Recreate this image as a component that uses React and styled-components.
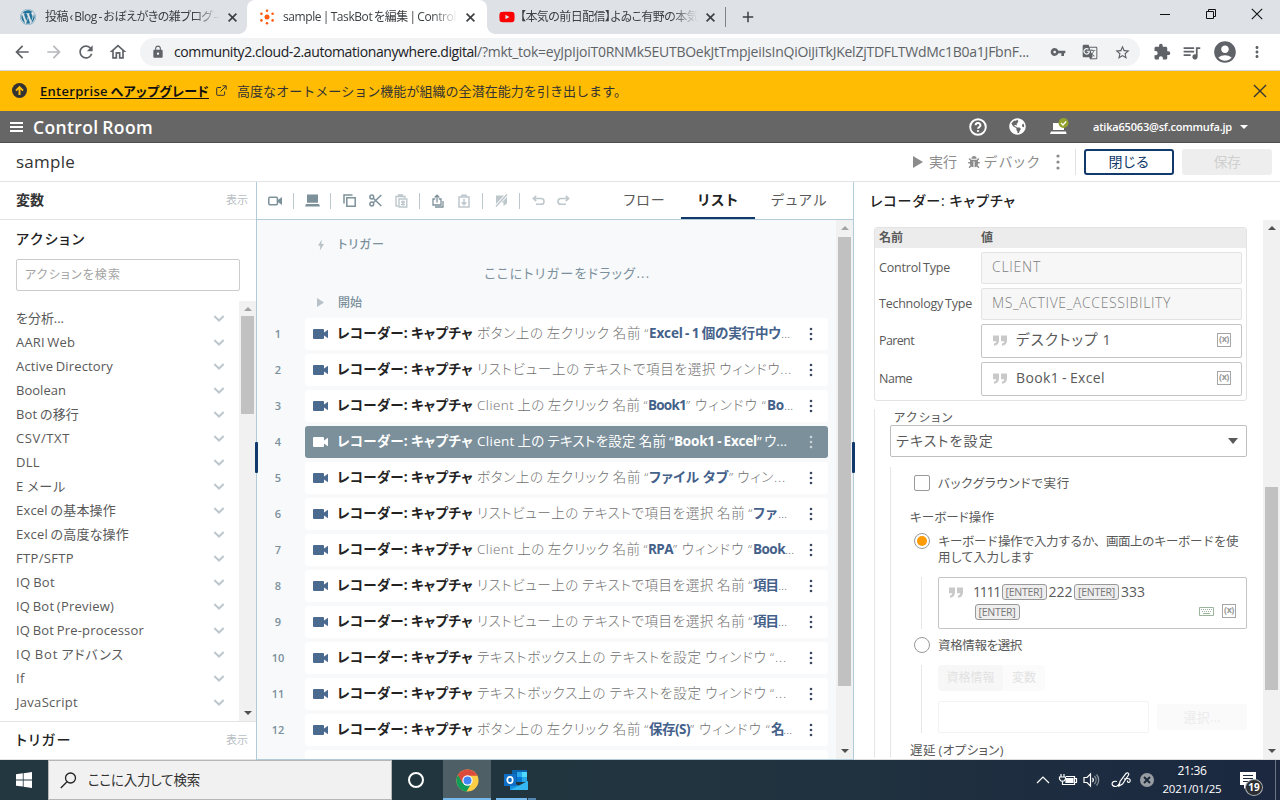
import React, { useLayoutEffect, useRef, useState } from "react";
import styled, { createGlobalStyle } from "styled-components";
import {
  MdArrowBack,
  MdArrowForward,
  MdRefresh,
  MdOutlineHome,
  MdLock,
  MdVpnKey,
  MdGTranslate,
  MdStarBorder,
  MdExtension,
  MdQueueMusic,
  MdAccountCircle,
  MdMoreVert,
  MdAdd,
} from "react-icons/md";
import { FaWordpress, FaYoutube, FaBug, FaGlobeAmericas } from "react-icons/fa";

const GlobalStyle = createGlobalStyle`
  * {
    box-sizing: border-box;
  }
  body {
    margin: 0;
    font-family: "Open Sans", "Noto Sans CJK JP", sans-serif;
    font-size: 13px;
    color: #595959;
    overflow: hidden;
  }
  svg {
    display: block;
    flex: none;
  }
`;

const Screen = styled.div`
  width: 1280px;
  height: 800px;
  display: flex;
  flex-direction: column;
  overflow: hidden;
  background: white;
`;

const Run = styled.span`
  display: inline-block;
  flex: none;
  justify-self: start;
  white-space: pre;
  line-height: 16px;
  word-spacing: -1px;
  font-feature-settings: ${(p) => (p.$full ? "normal" : '"palt"')};
  font-size: ${(p) => p.$size || 13}px;
  font-weight: ${(p) => p.$weight || 400};
  color: ${(p) => p.$color || "inherit"};
  text-decoration: ${(p) => (p.$underline ? "underline" : "none")};
  text-underline-offset: 2px;
`;

// tracks the letters so that the run takes up exactly w pixels
const Text = ({ w, size, weight, color, underline, full, children }) => {
  let ref = useRef();
  let [spacing, setSpacing] = useState(0);

  useLayoutEffect(() => {
    let natural = ref.current.getBoundingClientRect().width;
    setSpacing((w - natural) / [...children].length);
  }, []);

  return (
    <Run
      ref={ref}
      $size={size}
      $weight={weight}
      $color={color}
      $underline={underline}
      $full={full}
      style={{ letterSpacing: spacing }}
    >
      {children}
    </Run>
  );
};

/* ---------- browser ---------- */

const TabStrip = styled.div`
  height: 34px;
  flex: none;
  display: flex;
  background: #dee1e6;
`;

const Tab = styled.div`
  position: relative;
  width: ${(p) => p.$w}px;
  padding-left: ${(p) => p.$pad}px;
  display: flex;
  align-items: center;
  background: ${(p) => (p.$active ? "white" : "transparent")};
  border-radius: 8px 8px 0 0;
  color: #3c4043;
`;

const TabIcon = styled.div`
  width: ${(p) => p.$w}px;
  flex: none;
`;

const TabTitle = styled.div`
  width: ${(p) => p.$w}px;
  flex: none;
  height: 22px;
  display: flex;
  align-items: center;
  margin-right: 8px;
  mask-image: linear-gradient(to right, black 85%, transparent);
`;

const TabFoot = styled.div`
  position: absolute;
  bottom: 0;
  ${(p) => p.$side}: -8px;
  width: 8px;
  height: 8px;
  background: radial-gradient(
    circle at ${(p) => (p.$side === "left" ? "0 0" : "100% 0")},
    transparent 7.5px,
    white 8px
  );
`;

const TabDivider = styled.div`
  width: 1px;
  height: 20px;
  margin: 7px 13px 0 4px;
  background: #7f8388;
`;

const NewTab = styled.div`
  padding-top: 8px;
  color: #3c4043;
`;

const WindowButtons = styled.div`
  margin-left: auto;
  padding: 8px 17px 0 0;
  display: flex;
  gap: 34px;
`;

const AddressRow = styled.div`
  height: 37px;
  flex: none;
  display: flex;
  align-items: center;
  padding: 0 9px 0 12px;
  border-bottom: 1px solid #d5d8dc;
  color: #5f6368;
`;

const NavButton = styled.div`
  width: 32px;
  display: flex;
  opacity: ${(p) => (p.$off ? 0.45 : 1)};
`;

const AddressBar = styled.div`
  width: 1000px;
  height: 28px;
  margin-right: 13px;
  padding: 0 9px 0 11px;
  display: flex;
  align-items: center;
  border-radius: 14px;
  background: #f1f3f4;
`;

const LockBox = styled.div`
  width: 23px;
`;

const AddressIcons = styled.div`
  margin-left: auto;
  display: flex;
  align-items: center;
  gap: 16px;
`;

const ExtensionIcons = styled.div`
  display: flex;
  align-items: center;
  gap: 10px;
`;

/* ---------- banner and headers ---------- */

const Banner = styled.div`
  height: 40px;
  flex: none;
  display: flex;
  align-items: center;
  padding: 0 13px 1px 12px;
  background: #ffbc03;
  color: #333;
`;

const Gap = styled.div`
  width: ${(p) => p.$w}px;
  flex: none;
`;

const Push = styled.div`
  margin-left: auto;
  display: flex;
  align-items: center;
`;

const Header = styled.div`
  height: 32px;
  flex: none;
  display: flex;
  align-items: center;
  padding: 0 32px 0 10px;
  background: #666;
  border-bottom: 1px solid #4d4d4d;
  color: white;
`;

const Caret = styled.div`
  width: 0;
  height: 0;
  border-left: ${(p) => p.$s || 4}px solid transparent;
  border-right: ${(p) => p.$s || 4}px solid transparent;
  border-${(p) => (p.$up ? "bottom" : "top")}: ${(p) => p.$h || p.$s || 4}px solid
    ${(p) => p.$color || "white"};
`;

const TitleBar = styled.div`
  height: 39px;
  flex: none;
  display: flex;
  align-items: center;
  padding: 0 8px 0 16px;
  border-bottom: 1px solid #e0e4e7;
`;

const Separator = styled.div`
  width: 1px;
  height: ${(p) => p.$h || 16}px;
  flex: none;
  background: ${(p) => p.$color || "#bcc7cd"};
`;

const Button = styled.div`
  width: 90px;
  height: 26px;
  display: flex;
  align-items: center;
  justify-content: center;
  border-radius: 3px;
  border: ${(p) => (p.$off ? "none" : "2px solid #12396b")};
  background: ${(p) => (p.$off ? "#eee" : "white")};
  margin-left: 8px;
`;

/* ---------- workspace ---------- */

const Workspace = styled.div`
  height: 578px;
  flex: none;
  display: flex;
`;

const Side = styled.div`
  position: relative;
  width: 257px;
  flex: none;
  display: flex;
  flex-direction: column;
  border-right: 1px solid #b2cbd9;
`;

const SideHeader = styled.div`
  height: 38px;
  flex: none;
  display: flex;
  align-items: center;
  justify-content: space-between;
  padding: 0 8px 2px 16px;
  border-bottom: 1px solid #e0e4e7;
`;

const Handle = styled.div`
  position: absolute;
  top: 260px;
  ${(p) => p.$side}: -2px;
  width: 3px;
  height: 31px;
  background: #12396b;
  border-radius: 1px;
  z-index: 1;
`;

const SectionTitle = styled.div`
  height: 39px;
  padding: 0 0 2px 16px;
  display: flex;
  align-items: center;
`;

const SearchInput = styled.div`
  height: 32px;
  flex: none;
  margin: 0 16px 10px;
  padding-left: 8px;
  display: flex;
  align-items: center;
  border: 1px solid #ccc;
  border-radius: 2px;
`;

const PackageArea = styled.div`
  height: 421px;
  display: flex;
  border-bottom: 1px solid #e0e4e7;
`;

const PackageList = styled.div`
  flex: 1;
  padding: 5px 14px 0 16px;
`;

const Package = styled.div`
  height: 24px;
  display: flex;
  align-items: center;
  justify-content: space-between;
`;

const ScrollTrack = styled.div`
  width: ${(p) => p.$w}px;
  flex: none;
  display: flex;
  flex-direction: column;
  align-items: center;
  background: #f1f1f1;
  padding: 6px 0 6px;
`;

const Thumb = styled.div`
  width: 13px;
  height: ${(p) => p.$h}px;
  margin: ${(p) => p.$top}px 0 auto;
  background: #c1c1c1;
`;

const Center = styled.div`
  width: 597px;
  flex: none;
  display: flex;
  flex-direction: column;
  border-right: 1px solid #b2cbd9;
`;

const Toolbar = styled.div`
  height: 38px;
  flex: none;
  display: flex;
  align-items: center;
  border-bottom: 1px solid #b2cbd9;
  color: #7d919b;
`;

const Tool = styled.div`
  width: ${(p) => p.$w || 36}px;
  display: flex;
  justify-content: center;
  opacity: ${(p) => (p.$off ? 0.5 : 1)};
`;

const ViewTab = styled.div`
  height: 37px;
  width: 74px;
  display: flex;
  align-items: center;
  justify-content: center;
  padding: 0 0 1px 1px;
  box-shadow: ${(p) => (p.$active ? "inset 0 -2px 0 #12396b" : "none")};
`;

const CanvasArea = styled.div`
  flex: 1;
  min-height: 0;
  display: flex;
  background: #f7f9fb;
  border-bottom: 1px solid #b2cbd9;
`;

const Canvas = styled.div`
  width: 579px;
  overflow: hidden;
  padding-right: 8px;
`;

const CanvasLabel = styled.div`
  height: ${(p) => p.$h}px;
  margin-top: ${(p) => p.$top || 0}px;
  display: flex;
  align-items: center;
  padding: 1px 0 0 60px;
`;

const LabelIcon = styled.div`
  width: 21px;
`;

const DropHint = styled.div`
  height: 10px;
  display: flex;
  align-items: center;
  justify-content: center;
  padding-left: 50px;
`;

const Line = styled.div`
  display: grid;
  grid-template-columns: 42px 523px;
  column-gap: 6px;
  height: 32px;
  margin-bottom: 4px;
  align-items: center;
`;

const LineNumber = styled.div`
  padding-bottom: 2px;
  text-align: center;
  font-size: 11px;
  font-weight: 600;
  color: #7b909c;
`;

const LineBox = styled.div`
  height: 32px;
  display: flex;
  align-items: center;
  padding: 0 0 1px 8px;
  border-radius: 3px;
  background: ${(p) => (p.$selected ? "#7b909b" : "white")};
  color: ${(p) => (p.$selected ? "white" : "#6f6f6f")};
`;

const LineText = styled.div`
  width: 472px;
  height: 22px;
  display: flex;
  align-items: center;
  padding-bottom: 2px;
`;

/* ---------- detail panel ---------- */

const Detail = styled.div`
  position: relative;
  flex: 1;
  display: flex;
  flex-direction: column;
  border-bottom: 1px solid #ddd;
`;

const DetailTitle = styled.div`
  height: 38px;
  flex: none;
  display: flex;
  align-items: center;
  padding-left: 16px;
`;

const DetailScroll = styled.div`
  flex: 1;
  min-height: 0;
  display: flex;
`;

const DetailBody = styled.div`
  width: 409px;
  overflow: hidden;
  padding: 7px 16px 0 20px;
`;

const Table = styled.div`
  height: 174px;
  border: 1px solid #e3e3e3;
  border-radius: 3px;
`;

const TableRow = styled.div`
  display: grid;
  grid-template-columns: 102px 261px;
  align-items: center;
  padding-left: 4px;
  height: ${(p) => p.$h}px;
  margin-bottom: 4px;
  background: ${(p) => (p.$head ? "#ececec" : "white")};
`;

const Field = styled.div`
  height: ${(p) => p.$h}px;
  display: flex;
  align-items: center;
  padding: 0 10px 2px;
  border: 1px solid ${(p) => (p.$off ? "#e3e3e3" : "#c4c4c4")};
  border-radius: 2px;
  background: ${(p) => (p.$off ? "#f7f7f7" : "white")};
`;

const Group = styled.div`
  margin-top: ${(p) => p.$top || 0}px;
  margin-left: ${(p) => p.$left || 0}px;
  height: ${(p) => (p.$h ? `${p.$h}px` : "auto")};
  border-left: 1px solid #e6e6e6;
  padding-left: ${(p) => p.$pad || 15}px;
`;

const FieldLabel = styled.div`
  height: 16px;
  margin-top: ${(p) => p.$top || 0}px;
  padding: 1px 0 0 4px;
  display: flex;
  align-items: center;
`;

const Select = styled.div`
  height: 32px;
  padding: 0 8px 0 5px;
  display: flex;
  align-items: center;
  justify-content: space-between;
  border: 1px solid #bfbfbf;
  border-radius: 2px;
`;

const Option = styled.div`
  padding-top: ${(p) => p.$top}px;
  margin-left: 8px;
  display: flex;
  align-items: flex-start;
  gap: 8px;
`;

const OptionText = styled.div`
  margin: 1px 0 -1px;
  display: flex;
  flex-direction: column;
  align-items: flex-start;
`;

const Check = styled.div`
  width: 16px;
  height: 16px;
  flex: none;
  border: 1px solid #999;
  border-radius: ${(p) => (p.$round ? "50%" : "2px")};
  display: flex;
  align-items: center;
  justify-content: center;
`;

const RadioDot = styled.div`
  width: 10px;
  height: 10px;
  border-radius: 50%;
  background: #ff9b05;
`;

const KeyBox = styled.div`
  height: 52px;
  display: flex;
  border: 1px solid #c4c4c4;
  border-radius: 2px;
  padding: 6px 10px 0 9px;
`;

const KeyQuote = styled.div`
  padding-top: 3px;
`;

const KeyLines = styled.div`
  flex: 1;
  padding-left: 9px;
`;

const KeyLine = styled.div`
  height: 16px;
  margin-bottom: 4px;
  display: flex;
  align-items: center;
`;

const KeyChip = styled.div`
  width: 45px;
  height: 16px;
  margin: 0 2px 0 1.5px;
  display: flex;
  align-items: center;
  justify-content: center;
  border: 1px solid #999;
  border-radius: 3px;
  background: #eee;
`;

const KeyTools = styled.div`
  display: flex;
  align-items: center;
  gap: 8px;
  height: 14px;
  margin-top: 20px;
`;

const Segments = styled.div`
  width: 107px;
  height: 26px;
  display: flex;
  border-radius: 4px;
  background: #fbfbfb;
`;

const Segment = styled.div`
  width: ${(p) => p.$w}px;
  display: flex;
  align-items: center;
  justify-content: center;
  border-radius: 4px;
  background: ${(p) => (p.$active ? "#f7f7f7" : "transparent")};
`;

const CredentialRow = styled.div`
  margin-top: 10px;
  display: flex;
  align-items: center;
  gap: 8px;
`;

const CredentialInput = styled.div`
  width: 211px;
  height: 32px;
  border: 1px solid #f3f3f3;
  border-radius: 2px;
`;

const PickButton = styled.div`
  width: 90px;
  height: 26px;
  display: flex;
  align-items: center;
  justify-content: center;
  border-radius: 2px;
  background: #fafafa;
`;

const VariableMark = styled.div`
  width: 14px;
  height: 14px;
  border: 1px solid #a6a6a6;
  font-size: 9px;
  font-weight: 700;
  line-height: 10px;
  letter-spacing: -0.5px;
  text-align: center;
  color: #999;
`;

/* ---------- taskbar ---------- */

const Taskbar = styled.div`
  height: 40px;
  flex: none;
  display: flex;
  background: linear-gradient(to right, #22373f, #21343f 55%, #1b2840);
`;

const TaskButton = styled.div`
  position: relative;
  width: ${(p) => p.$w || 48}px;
  display: flex;
  align-items: center;
  justify-content: center;
  background: ${(p) => (p.$active ? "#4f5f66" : "transparent")};
`;

const TaskMark = styled.div`
  position: absolute;
  left: ${(p) => p.$left || 0}px;
  bottom: 0;
  width: ${(p) => p.$w}px;
  height: 2px;
  background: ${(p) => (p.$dim ? "#5487b0" : "#76b9ed")};
`;

const CortanaRing = styled.div`
  width: 16px;
  height: 16px;
  border: 2px solid white;
  border-radius: 50%;
`;

const TaskSearch = styled.div`
  width: 344px;
  display: flex;
  align-items: center;
  gap: 11px;
  padding-left: 11px;
  background: #f1f1f1;
  border: 1px solid #b4b6b8;
`;

const Tray = styled.div`
  margin-left: auto;
  display: flex;
  align-items: center;
  color: white;
`;

const Clock = styled.div`
  width: 60px;
  height: 34px;
  margin: 0 17px 0 8px;
  display: flex;
  flex-direction: column;
  align-items: center;
  justify-content: space-between;
`;

const Notify = styled.div`
  position: relative;
  width: 26px;
  height: 30px;
  margin-right: 10px;
  padding-top: 7px;
`;

const NotifyBadge = styled.div`
  position: absolute;
  left: 6px;
  top: 14px;
  width: 18px;
  height: 17px;
  border-radius: 50%;
  border: 1px solid #a9adb0;
  background: #2a2e33;
  font-size: 10px;
  font-weight: 700;
  line-height: 14px;
  text-align: center;
`;

const DesktopEdge = styled.div`
  width: 5px;
  height: 40px;
  border-left: 1px solid #6d7582;
`;

/* ---------- drawings ---------- */

const AutomationLogo = () => (
  <svg width="16" height="16" viewBox="0 0 16 16" fill="#ff5a10">
    <circle cx="8" cy="8" r="2.5" />
    <circle cx="8" cy="1.8" r="1.3" />
    <circle cx="8" cy="14.2" r="1.3" />
    <circle cx="2.4" cy="4.8" r="1.3" />
    <circle cx="13.6" cy="4.8" r="1.3" />
    <circle cx="2.4" cy="11.4" r="1.3" />
    <circle cx="13.6" cy="11.4" r="1.3" />
  </svg>
);

const MinimizeIcon = () => (
  <svg width="12" height="12" viewBox="0 0 12 12" stroke="#111">
    <path d="M1 6.5h10" />
  </svg>
);

const RestoreIcon = () => (
  <svg width="12" height="12" viewBox="0 0 12 12" stroke="#111" fill="none">
    <path d="M1.5 3.5h7v7h-7zM3.5 3.5v-2h7v7h-2" />
  </svg>
);

const CrossIcon = ({ size = 12, color = "#111", width = 1.1 }) => (
  <svg
    width={size}
    height={size}
    viewBox="0 0 12 12"
    stroke={color}
    strokeWidth={width}
  >
    <path d="M.8.8l10.4 10.4M11.2.8L.8 11.2" />
  </svg>
);

const TabClose = () => <CrossIcon size={9} color="#3c4043" width={2.2} />;

const HelpIcon = () => (
  <svg width="18" height="18" viewBox="0 0 18 18" fill="none" stroke="white">
    <circle cx="9" cy="9" r="7.8" strokeWidth="1.9" />
    <path d="M6.6 7.2a2.400 2.200 0 1 1 3.600 1.900c-.8.5-1.200.8-1.200 1.700" strokeWidth="1.900" />
    <circle cx="9" cy="13" r="1.100" fill="white" stroke="none" />
  </svg>
);

const UpgradeIcon = () => (
  <svg width="15" height="15" viewBox="0 0 15 15">
    <circle cx="7.5" cy="7.5" r="7.5" fill="#333" />
    <path
      d="M7.5 12V4.2M4 7.6l3.5-3.5L11 7.6"
      stroke="#ffbc03"
      strokeWidth="2"
      fill="none"
    />
  </svg>
);

const ExternalIcon = () => (
  <svg width="11" height="11" viewBox="0 0 11 11" fill="none" stroke="#333">
    <path d="M5 2.5H1.5a.8.8 0 0 0-.8.8v6.2a.8.8 0 0 0 .8.8h6.3a.8.8 0 0 0 .8-.8V6.5M6.5.8h3.7v3.7M10 1L4.5 6.5" />
  </svg>
);

const BurgerIcon = () => (
  <svg width="13" height="10" viewBox="0 0 13 10" fill="white">
    <path d="M0 0h13v2H0zM0 4h13v2H0zM0 8h13v2H0z" />
  </svg>
);

const DeviceIcon = () => (
  <svg width="19" height="20" viewBox="0 0 19 20">
    <path d="M3 6h11v7H3zM1 14.500h15l.5 2.500H0z" fill="white" />
    <circle cx="13.5" cy="6" r="5" fill="#94a22d" />
    <path d="M11 6l2 2 3.2-3.6" stroke="white" strokeWidth="1.3" fill="none" />
  </svg>
);

const PlayIcon = ({ w = 10, h = 12, color }) => (
  <svg width={w} height={h} viewBox="0 0 10 12" fill={color} preserveAspectRatio="none">
    <path d="M0 0l10 6-10 6z" />
  </svg>
);

const DotsIcon = ({ color, r = 1.3, gap = 5, size = 16 }) => (
  <svg width="4" height={size} viewBox={`0 ${-size / 2} 4 ${size}`} fill={color}>
    <circle cx="2" cy={-gap} r={r} />
    <circle cx="2" cy="0" r={r} />
    <circle cx="2" cy={gap} r={r} />
  </svg>
);

const ChevronIcon = () => (
  <svg width="12" height="8" viewBox="0 0 12 8">
    <path
      d="M1.3 2L6 6.500l4.7-4.500"
      stroke="#bdc8ce"
      strokeWidth="2"
      fill="none"
    />
  </svg>
);

const CameraIcon = ({ color }) => (
  <svg width="15" height="12" viewBox="0 0 15 12" fill={color}>
    <path d="M1 1h9a1 1 0 0 1 1 1v2.400L15 1.800v8.400l-4-2.600V10a1 1 0 0 1-1 1H1a1 1 0 0 1-1-1V2a1 1 0 0 1 1-1z" />
  </svg>
);

const RecordIcon = () => (
  <svg width="14" height="10" viewBox="0 0 14 10">
    <rect x=".8" y="1.3" width="8.6" height="7.4" rx="1" fill="none" stroke="currentColor" strokeWidth="1.5" />
    <path d="M9.8 4L14 1v8L9.8 6z" fill="currentColor" />
  </svg>
);

const LaptopIcon = () => (
  <svg width="15" height="13" viewBox="0 0 15 13" fill="currentColor">
    <path d="M2 .5h11v8.300H2zM1 10h13l1 2.500H0z" />
  </svg>
);

const CopyIcon = () => (
  <svg width="13" height="13" viewBox="0 0 13 13" fill="none" stroke="currentColor" strokeWidth="1.5">
    <path d="M3.8 3.8h8.4v8.4H3.8zM1 9.5V1h8.5" />
  </svg>
);

const CutIcon = () => (
  <svg width="13" height="13" viewBox="0 0 13 13" fill="none" stroke="currentColor" strokeWidth="1.5">
    <circle cx="2.8" cy="3" r="1.9" />
    <circle cx="2.8" cy="10" r="1.9" />
    <path d="M4.3 4.3l8 7.7M4.3 8.7l8-7.7" />
  </svg>
);

const PasteIcon = () => (
  <svg width="13" height="14" viewBox="0 0 13 14" fill="none" stroke="currentColor" strokeWidth="1.4">
    <path d="M3 12H1V2.5h9V4M3.5 2.5V1h4v1.5M4 5h7.8v8H4zM6 8h4M6 10.5h4M8 6.5v5" />
  </svg>
);

const ShareIcon = () => (
  <svg width="12" height="14" viewBox="0 0 12 14" fill="none" stroke="currentColor" strokeWidth="1.3">
    <path d="M3.2 5H1v6h8V5H6.8M5 8.5V1.4M2.7 3.5L5 1.2l2.3 2.3M3 13h8V7" />
  </svg>
);

const ClipDownIcon = () => (
  <svg width="12" height="14" viewBox="0 0 12 14" fill="none" stroke="currentColor" strokeWidth="1.5">
    <path d="M1 3h10v10H1zM4 3V1.200h4V3M6 5v5.500M3.600 8.200L6 10.600l2.400-2.400" />
  </svg>
);

const DisableIcon = () => (
  <svg width="13" height="13" viewBox="0 0 13 13">
    <path d="M1 1.500h8L1 10zM12 3v6.500L8.500 12V8.500H6.500z" fill="currentColor" />
    <path d="M1 12.500L12 .5" stroke="currentColor" strokeWidth="1.500" />
  </svg>
);

const UndoIcon = ({ flip }) => (
  <svg width="13" height="11" viewBox="0 0 13 11" fill="none" stroke="currentColor" strokeWidth="1.600">
    <path
      transform={flip ? "translate(13 0) scale(-1 1)" : undefined}
      d="M4.200.8L1.400 3.500l2.800 2.700M1.500 3.500h7.600a2.800 2.800 0 0 1 0 5.800H4"
    />
  </svg>
);

const BoltIcon = () => (
  <svg width="8" height="12" viewBox="0 0 8 12" fill="#b7c1c7">
    <path d="M4.800.5L1 6.800h2.400L2.800 11.500 7 5H4.400z" />
  </svg>
);

const QuoteIcon = () => (
  <svg width="16" height="11" viewBox="0 0 16 11" fill="#c9c9c9">
    <path d="M1 .5h6v5C7 8.500 5 10.500 2 10.800V8.500C3.500 8.300 4.200 7.500 4.200 6.200H1zM9 .5h6v5c0 3-2 5-5 5.300V8.500c1.500-.2 2.200-1 2.200-2.300H9z" />
  </svg>
);

const KeyboardIcon = () => (
  <svg width="15" height="9" viewBox="0 0 15 9" fill="none" stroke="#9cb39c">
    <path d="M.5.5h14v8H.5z" />
    <path d="M2 2.500h11M3 4.500h10" strokeDasharray="1 1" />
    <path d="M4 6.500h7" />
  </svg>
);

const WindowsIcon = () => (
  <svg width="16" height="16" viewBox="0 0 16 16" fill="white">
    <path d="M0 2.300L6.800 1.300v6.200H0zM7.600 1.200L16 0v7.500H7.600zM0 8.400h6.800v6.200L0 13.700zM7.600 8.400H16V16l-8.400-1.200z" />
  </svg>
);

const SearchIcon = () => (
  <svg width="17" height="17" viewBox="0 0 17 17" fill="none" stroke="#222" strokeWidth="1.300">
    <circle cx="10.500" cy="6" r="5" />
    <path d="M7 9.800L.8 16" />
  </svg>
);

const ChromeIcon = () => (
  <svg width="23" height="23" viewBox="0 0 24 24">
    <circle cx="12" cy="12" r="11.500" fill="#ffcd46" />
    <path d="M2 6.300A11.500 11.500 0 0 0 11 23.500l5.500-9.500z" fill="#0f9d58" />
    <path d="M2 6.300A11.500 11.500 0 0 1 22.300 7H12l-5 8z" fill="#dd4b3e" />
    <circle cx="12" cy="12" r="5.400" fill="white" />
    <circle cx="12" cy="12" r="4.200" fill="#4285f4" />
  </svg>
);

const OutlookIcon = () => (
  <svg width="24" height="22" viewBox="0 0 24 22">
    <path d="M8 1h15v12H8z" fill="#0a64ad" />
    <path d="M13 3h5v5h-5z" fill="#28a8ea" />
    <path d="M18 3h5v5h-5z" fill="#50d9ff" />
    <path d="M13 8h5v5h-5z" fill="#0078d4" />
    <path d="M18 8h5v5h-5z" fill="#28a8ea" />
    <path d="M6 12l9 5 9-5v9H6z" fill="#1490df" />
    <path d="M6 21l18-9v9z" fill="#35b8f1" />
    <path d="M0 5h12v12H0z" fill="#0f6fc6" />
    <ellipse cx="6" cy="11" rx="2.700" ry="3.200" fill="none" stroke="white" strokeWidth="1.700" />
  </svg>
);

const TrayIcons = () => (
  <svg width="118" height="20" viewBox="0 0 118 20" fill="none" stroke="white" strokeWidth="1.200">
    <path d="M1 13l6-6 6 6" />
    <path d="M30 6.500h8.500v8H28" />
    <path d="M30 8.500h7v4h-7z" fill="white" />
    <path d="M39 8.500h1.500v4H39M25 4v3M28 4v3M23.500 7h6v2L28 11h-3l-1.500-2zM26.500 11v3.500h2" />
    <path d="M48 7.500h3L54.500 4v12L51 12.500h-3z" />
    <path d="M56.500 8a3 3 0 0 1 0 4" />
    <path d="M58.500 6a6 6 0 0 1 0 8M60.500 4.500a8 8 0 0 1 0 11" stroke="#8b949b" />
    <path d="M81 11.500c-6-1.500-6.500 5-1.500 5 2.500 0 3.500-2 4.500-4M83 16l1-4.500L90 3.500c1.500-1.500 3.500 0 2.500 1.500L86.500 14zM88 9c4-1 7-.5 6 2.500-1 1.500-3 1-2.500-1" />
    <circle cx="111" cy="10" r="7" fill="#999da3" stroke="none" />
    <path d="M108 7l6 6M114 7l-6 6" stroke="#1d2a3a" strokeWidth="2" />
  </svg>
);

const MessageIcon = () => (
  <svg width="18" height="17" viewBox="0 0 18 17">
    <path d="M1 0h16v13H9l-4 4v-4H1z" fill="white" />
    <path d="M4 3.500h10M4 6.500h10M4 9.500h10" stroke="#1c2a40" />
  </svg>
);

/* ---------- data ---------- */

const packages = [
  ["を分析...", 48],
  ["AARI Web", 59],
  ["Active Directory", 97],
  ["Boolean", 50],
  ["Bot の移行", 63],
  ["CSV/TXT", 54],
  ["DLL", 24],
  ["E メール", 50],
  ["Excel の基本操作", 100],
  ["Excel の高度な操作", 113],
  ["FTP/SFTP", 58],
  ["IQ Bot", 39],
  ["IQ Bot (Preview)", 98],
  ["IQ Bot Pre-processor", 128],
  ["IQ Bot アドバンス", 108],
  ["If", 9],
  ["JavaScript", 62],
];

// [text, width, bold]
const lines = [
  [
    ["ボタン上の 左クリック 名前 “", 172],
    ["Excel - 1 個の実行中ウ", 132, true],
    ["...", 9],
  ],
  [["リストビュー上の テキストで項目を選択 ウィンドウ...", 315]],
  [
    ["Client 上の 左クリック 名前 “", 171],
    ["Book1", 38, true],
    ["” ウィンドウ “", 81],
    ["Bo", 17, true],
    ["...", 9],
  ],
  [
    ["Client 上の テキストを設定 名前 “", 197],
    ["Book1 - Excel", 83, true],
    ["” ウ...", 30],
  ],
  [
    ["ボタン上の 左クリック 名前 “", 172],
    ["ファイル タブ", 80, true],
    ["” ウィン...", 57],
  ],
  [
    ["リストビュー上の テキストで項目を選択 名前 “", 276],
    ["ファ", 25, true],
    ["...", 9],
  ],
  [
    ["Client 上の 左クリック 名前 “", 171],
    ["RPA", 25, true],
    ["” ウィンドウ “", 80],
    ["Book", 32, true],
    ["...", 9],
  ],
  [
    ["リストビュー上の テキストで項目を選択 名前 “", 276],
    ["項目", 25, true],
    ["...", 9],
  ],
  [
    ["リストビュー上の テキストで項目を選択 名前 “", 276],
    ["項目", 25, true],
    ["...", 9],
  ],
  [["テキストボックス上の テキストを設定 ウィンドウ “...", 310]],
  [["テキストボックス上の テキストを設定 ウィンドウ “...", 310]],
  [
    ["ボタン上の 左クリック 名前 “", 172],
    ["保存(S)", 41, true],
    ["” ウィンドウ “", 81],
    ["名", 12, true],
    ["...", 9],
  ],
];

const selectedLine = 3;

/* ---------- page ---------- */

const Browser = () => (
  <>
    <TabStrip>
      <Tab $w={247} $pad={20}>
        <TabIcon $w={25}>
          <FaWordpress size={16} color="#21759b" />
        </TabIcon>
        <TabTitle $w={175}>
          <Text w={174} size={12}>投稿 ‹ Blog - おぼえがきの雑ブログ –</Text>
        </TabTitle>
        <TabClose />
      </Tab>
      <Tab $w={240} $pad={12} $active>
        <TabFoot $side="left" />
        <TabIcon $w={24}>
          <AutomationLogo />
        </TabIcon>
        <TabTitle $w={175}>
          <Text w={173} size={12}>sample | TaskBot を編集 | Control</Text>
        </TabTitle>
        <TabClose />
        <TabFoot $side="right" />
      </Tab>
      <Tab $w={234} $pad={12}>
        <TabIcon $w={21}>
          <FaYoutube size={16} color="#f00" />
        </TabIcon>
        <TabTitle $w={178}>
          <Text w={178} size={12}>【本気の前日配信】よゐこ有野の本気</Text>
        </TabTitle>
        <TabClose />
      </Tab>
      <TabDivider />
      <NewTab>
        <MdAdd size={18} />
      </NewTab>
      <WindowButtons>
        <MinimizeIcon />
        <RestoreIcon />
        <CrossIcon />
      </WindowButtons>
    </TabStrip>
    <AddressRow>
      <NavButton><MdArrowBack size={20} /></NavButton>
      <NavButton $off><MdArrowForward size={20} /></NavButton>
      <NavButton><MdRefresh size={20} /></NavButton>
      <NavButton><MdOutlineHome size={20} /></NavButton>
      <AddressBar>
        <LockBox><MdLock size={14} /></LockBox>
        <Text w={303} size={14} color="#202124">
          community2.cloud-2.automationanywhere.digital
        </Text>
        <Text w={552} size={14}>
          /?mkt_tok=eyJpIjoiT0RNMk5EUTBOekJtTmpjeiIsInQiOiJiTkJKelZjTDFLTWdMc1B0a1JFbnF...
        </Text>
        <AddressIcons>
          <MdVpnKey size={16} />
          <MdGTranslate size={16} />
          <MdStarBorder size={17} />
        </AddressIcons>
      </AddressBar>
      <ExtensionIcons>
        <MdExtension size={18} />
        <MdQueueMusic size={21} />
        <MdAccountCircle size={26} />
        <MdMoreVert size={18} />
      </ExtensionIcons>
    </AddressRow>
  </>
);

const Headers = () => (
  <>
    <Banner>
      <UpgradeIcon />
      <Gap $w={13} />
      <Text w={169} weight={600} color="#111" underline>
        Enterprise へアップグレード
      </Text>
      <Gap $w={7} />
      <ExternalIcon />
      <Gap $w={10} />
      <Text w={390} full>高度なオートメーション機能が組織の全潜在能力を引き出します。</Text>
      <Push>
        <CrossIcon size={14} color="#333" />
      </Push>
    </Banner>
    <Header>
      <BurgerIcon />
      <Gap $w={10} />
      <Text w={120} size={17.5} weight={600}>Control Room</Text>
      <Push>
        <HelpIcon />
        <Gap $w={22} />
        <FaGlobeAmericas size={17} />
        <Gap $w={24} />
        <DeviceIcon />
        <Gap $w={24} />
        <Text w={139} size={11} weight={600}>atika65063@sf.commufa.jp</Text>
        <Gap $w={8} />
        <Caret />
      </Push>
    </Header>
    <TitleBar>
      <Text w={59} size={17} color="#333">sample</Text>
      <Push>
        <PlayIcon color="#8c8c8c" />
        <Gap $w={6} />
        <Text w={28} size={14} color="#8c8c8c">実行</Text>
        <Gap $w={11} />
        <FaBug size={12} color="#8c8c8c" />
        <Gap $w={4} />
        <Text w={57} size={14} color="#8c8c8c">デバック</Text>
        <Gap $w={15} />
        <DotsIcon color="#8c8c8c" r={1.6} gap={6} />
        <Gap $w={15} />
        <Separator $h={26} $color="#e2e2e2" />
        <Button>
          <Text w={41} size={14} color="#12396b">閉じる</Text>
        </Button>
        <Button $off>
          <Text w={27} size={14} color="#d0d0d0">保存</Text>
        </Button>
      </Push>
    </TitleBar>
  </>
);

const Scrollbar = ({ w, top, h, color = "#505050" }) => (
  <ScrollTrack $w={w}>
    <Caret $up $color={color} />
    <Thumb $top={top} $h={h} />
    <Caret $color="#505050" />
  </ScrollTrack>
);

const Packages = () => (
  <Side>
    <SideHeader>
      <Text w={28} size={14} weight={700} color="#333">変数</Text>
      <Text w={22} size={11} color="#b8c0c5">表示</Text>
    </SideHeader>
    <SectionTitle>
      <Text w={70} size={14} weight={500} color="#222">アクション</Text>
    </SectionTitle>
    <SearchInput>
      <Text w={96} size={12} color="#a3a3a3">アクションを検索</Text>
    </SearchInput>
    <PackageArea>
      <PackageList>
        {packages.map(([name, w]) => (
          <Package key={name}>
            <Text w={w}>{name}</Text>
            <ChevronIcon />
          </Package>
        ))}
      </PackageList>
      <Scrollbar w={17} top={5} h={98} color="#a3a3a3" />
    </PackageArea>
    <SideHeader>
      <Text w={56} size={14} weight={500} color="#222">トリガー</Text>
      <Text w={22} size={11} color="#b8c0c5">表示</Text>
    </SideHeader>
    <Handle $side="right" />
  </Side>
);

const EditorToolbar = () => (
  <Toolbar>
    <Tool><RecordIcon /></Tool>
    <Separator />
    <Tool><LaptopIcon /></Tool>
    <Separator />
    <Tool><CopyIcon /></Tool>
    <Tool $w={16}><CutIcon /></Tool>
    <Tool $off><PasteIcon /></Tool>
    <Separator />
    <Tool><ShareIcon /></Tool>
    <Tool $w={16} $off><ClipDownIcon /></Tool>
    <Gap $w={10} />
    <Separator />
    <Tool $off><DisableIcon /></Tool>
    <Separator />
    <Tool $off><UndoIcon /></Tool>
    <Tool $w={14} $off><UndoIcon flip /></Tool>
    <Gap $w={37} />
    <ViewTab>
      <Text w={42} size={14} color="#595959">フロー</Text>
    </ViewTab>
    <ViewTab $active>
      <Text w={42} size={14} weight={700} color="#222">リスト</Text>
    </ViewTab>
    <Gap $w={7} />
    <ViewTab>
      <Text w={57} size={14} color="#595959">デュアル</Text>
    </ViewTab>
  </Toolbar>
);

const EditorLine = ({ number, parts, selected }) => (
  <Line>
    <LineNumber>{number}</LineNumber>
    <LineBox $selected={selected}>
      <CameraIcon color={selected ? "white" : "#4a6a90"} />
      <Gap $w={9} />
      <LineText>
        <Text w={136} size={13.5} weight={700} color={selected ? "white" : "#222"}>
          レコーダー: キャプチャ
        </Text>
        <Gap $w={4} />
        {parts.map(([text, w, bold], n) => (
          <Text
            key={n}
            w={w}
            size={13.5}
            weight={bold ? 700 : selected ? 400 : 300}
            color={bold && !selected ? "#44618a" : undefined}
          >
            {text}
          </Text>
        ))}
      </LineText>
      <DotsIcon color={selected ? "#ccd4d8" : "#3a4a60"} />
    </LineBox>
  </Line>
);

const Editor = () => (
  <Center>
    <EditorToolbar />
    <CanvasArea>
      <Canvas>
        <CanvasLabel $h={48}>
          <LabelIcon><BoltIcon /></LabelIcon>
          <Text w={47} size={12} weight={500} color="#7b909c">トリガー</Text>
        </CanvasLabel>
        <DropHint>
          <Text w={166} color="#7b909c">ここにトリガーをドラッグ...</Text>
        </DropHint>
        <CanvasLabel $h={32} $top={8}>
          <LabelIcon><PlayIcon w={7} h={9} color="#b7c1c7" /></LabelIcon>
          <Text w={24} size={12} weight={500} color="#7b909c">開始</Text>
        </CanvasLabel>
        {lines.map((parts, i) => (
          <EditorLine
            key={i}
            number={i + 1}
            parts={parts}
            selected={i === selectedLine}
          />
        ))}
        <Line>
          <LineNumber />
          <LineBox />
        </Line>
      </Canvas>
      <Scrollbar w={17} top={7} h={449} color="#a3a3a3" />
    </CanvasArea>
  </Center>
);

const Properties = () => (
  <Table>
    <TableRow $h={20} $head>
      <Text w={24} size={12} weight={700}>名前</Text>
      <Text w={12} size={12} weight={700}>値</Text>
    </TableRow>
    <TableRow $h={32}>
      <Text w={71} size={12.5}>Control Type</Text>
      <Field $h={32} $off>
        <Text w={49} size={14} weight={300} color="#808080">CLIENT</Text>
      </Field>
    </TableRow>
    <TableRow $h={32}>
      <Text w={93} size={12.5}>Technology Type</Text>
      <Field $h={32} $off>
        <Text w={179} size={14} weight={300} color="#808080">MS_ACTIVE_ACCESSIBILITY</Text>
      </Field>
    </TableRow>
    <TableRow $h={34}>
      <Text w={35} size={12.5}>Parent</Text>
      <Field $h={34}>
        <QuoteIcon />
        <Gap $w={8} />
        <Text w={96} size={14.5}>デスクトップ 1</Text>
        <Push><VariableMark>(x)</VariableMark></Push>
      </Field>
    </TableRow>
    <TableRow $h={34}>
      <Text w={33} size={12.5}>Name</Text>
      <Field $h={34}>
        <QuoteIcon />
        <Gap $w={8} />
        <Text w={89} size={14}>Book1 - Excel</Text>
        <Push><VariableMark>(x)</VariableMark></Push>
      </Field>
    </TableRow>
  </Table>
);

const EnterKey = () => (
  <KeyChip>
    <Text w={37} size={10.5} color="#777">[ENTER]</Text>
  </KeyChip>
);

const Keystrokes = () => (
  <KeyBox>
    <KeyQuote><QuoteIcon /></KeyQuote>
    <KeyLines>
      <KeyLine>
        <Text w={27} size={14}>1111</Text>
        <EnterKey />
        <Text w={24} size={14}>222</Text>
        <EnterKey />
        <Text w={24} size={14}>333</Text>
      </KeyLine>
      <KeyLine>
        <EnterKey />
      </KeyLine>
    </KeyLines>
    <KeyTools>
      <KeyboardIcon />
      <VariableMark>(x)</VariableMark>
    </KeyTools>
  </KeyBox>
);

const Details = () => (
  <Detail>
    <Handle $side="left" />
    <DetailTitle>
      <Text w={146} size={14} weight={500} color="#222">レコーダー: キャプチャ</Text>
    </DetailTitle>
    <DetailScroll>
      <DetailBody>
        <Properties />
        <Group $top={8}>
          <FieldLabel><Text w={60} size={12}>アクション</Text></FieldLabel>
          <Select>
            <Text w={98} size={14}>テキストを設定</Text>
            <Caret $s={5} $h={6} $color="#595959" />
          </Select>
          <Group $top={10}>
            <Option $top={8}>
              <Check />
              <OptionText>
                <Text w={132} size={12.5}>バックグラウンドで実行</Text>
              </OptionText>
            </Option>
            <FieldLabel $top={18}>
              <Text w={84} size={12.5}>キーボード操作</Text>
            </FieldLabel>
            <Option $top={8}>
              <Check $round><RadioDot /></Check>
              <OptionText>
                <Text w={300} size={12.5} full>
                  キーボード操作で入力するか、画面上のキーボードを使
                </Text>
                <Text w={96} size={12.5}>用して入力します</Text>
              </OptionText>
            </Option>
            <Group $top={12} $left={15} $h={52} $pad={16}>
              <Keystrokes />
            </Group>
            <Option $top={8}>
              <Check $round />
              <OptionText>
                <Text w={84} size={12.5}>資格情報を選択</Text>
              </OptionText>
            </Option>
            <Group $top={12} $left={15} $h={68} $pad={16}>
              <Segments>
                <Segment $w={65} $active>
                  <Text w={48} size={12} color="#e2e2e2">資格情報</Text>
                </Segment>
                <Segment $w={42}>
                  <Text w={24} size={12} color="#e2e2e2">変数</Text>
                </Segment>
              </Segments>
              <CredentialRow>
                <CredentialInput />
                <PickButton>
                  <Text w={37} size={13} color="#ececec">選択...</Text>
                </PickButton>
              </CredentialRow>
            </Group>
            <FieldLabel $top={9}>
              <Text w={94} size={12.5}>遅延 (オプション)</Text>
            </FieldLabel>
          </Group>
        </Group>
      </DetailBody>
      <Scrollbar w={17} top={257} h={203} />
    </DetailScroll>
  </Detail>
);

const WindowsTaskbar = () => (
  <Taskbar>
    <TaskButton><WindowsIcon /></TaskButton>
    <TaskSearch>
      <SearchIcon />
      <Text w={112} size={13.5} color="#333">ここに入力して検索</Text>
    </TaskSearch>
    <TaskButton><CortanaRing /></TaskButton>
    <Gap $w={3} />
    <TaskButton $active>
      <ChromeIcon />
      <TaskMark $w={48} />
    </TaskButton>
    <Gap $w={5} />
    <TaskButton $w={40}>
      <OutlookIcon />
      <TaskMark $w={31} />
      <TaskMark $left={32} $w={8} $dim />
    </TaskButton>
    <Tray>
      <TrayIcons />
      <Clock>
        <Text w={29} size={12}>21:36</Text>
        <Text w={59} size={11.5}>2021/01/25</Text>
      </Clock>
      <Notify>
        <MessageIcon />
        <NotifyBadge>19</NotifyBadge>
      </Notify>
      <DesktopEdge />
    </Tray>
  </Taskbar>
);

export default function App() {
  return (
    <Screen>
      <GlobalStyle />
      <Browser />
      <Headers />
      <Workspace>
        <Packages />
        <Editor />
        <Details />
      </Workspace>
      <WindowsTaskbar />
    </Screen>
  );
}
